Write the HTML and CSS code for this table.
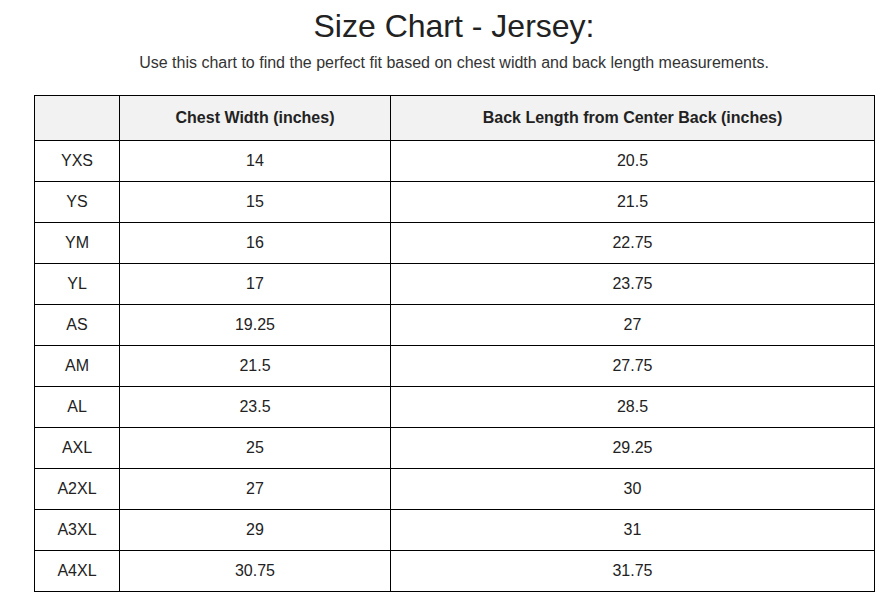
FILE: index.html
```html
<!DOCTYPE html>
<html lang="en">
<head>
<meta charset="utf-8">
<title>Size Chart - Jersey</title>
<link rel="stylesheet" href="styles.css">
</head>
<body>
<div class="page">
  <h1 class="title">Size Chart - Jersey:</h1>
  <p class="subtitle">Use this chart to find the perfect fit based on chest width and back length measurements.</p>
  <table class="chart">
    <colgroup>
      <col class="c-size">
      <col class="c-chest">
      <col class="c-back">
    </colgroup>
    <thead>
      <tr class="head-row"><th></th><th>Chest Width (inches)</th><th>Back Length from Center Back (inches)</th></tr>
    </thead>
    <tbody>
      <tr><td>YXS</td><td>14</td><td>20.5</td></tr>
      <tr><td>YS</td><td>15</td><td>21.5</td></tr>
      <tr><td>YM</td><td>16</td><td>22.75</td></tr>
      <tr><td>YL</td><td>17</td><td>23.75</td></tr>
      <tr><td>AS</td><td>19.25</td><td>27</td></tr>
      <tr><td>AM</td><td>21.5</td><td>27.75</td></tr>
      <tr><td>AL</td><td>23.5</td><td>28.5</td></tr>
      <tr><td>AXL</td><td>25</td><td>29.25</td></tr>
      <tr><td>A2XL</td><td>27</td><td>30</td></tr>
      <tr><td>A3XL</td><td>29</td><td>31</td></tr>
      <tr><td>A4XL</td><td>30.75</td><td>31.75</td></tr>
    </tbody>
  </table>
</div>
</body>
</html>
```
FILE: styles.css
```css
html, body {
  margin: 0;
  padding: 0;
  background: #ffffff;
}
body {
  font-family: "Liberation Sans", Arial, sans-serif;
  color: #222222;
}
.page {
  padding: 8px 15px 0 34px;
}
.title {
  margin: 0;
  font-size: 32px;
  line-height: 37px;
  font-weight: normal;
  text-align: center;
  color: #222222;
}
.subtitle {
  margin: 9px 0 23px;
  font-size: 16px;
  line-height: 18px;
  text-align: center;
  color: #333333;
}
.chart {
  width: 840px;
  border-collapse: collapse;
  table-layout: fixed;
  font-size: 16px;
}
.c-size { width: 85px; }
.c-chest { width: 271px; }
.c-back { width: 484px; }
.chart th,
.chart td {
  border: 1px solid #000000;
  text-align: center;
  padding: 0 8px;
  color: #222222;
}
.chart th {
  background: #f2f2f2;
  font-weight: bold;
  height: 44px;
}
.chart td {
  height: 40px;
}
```
